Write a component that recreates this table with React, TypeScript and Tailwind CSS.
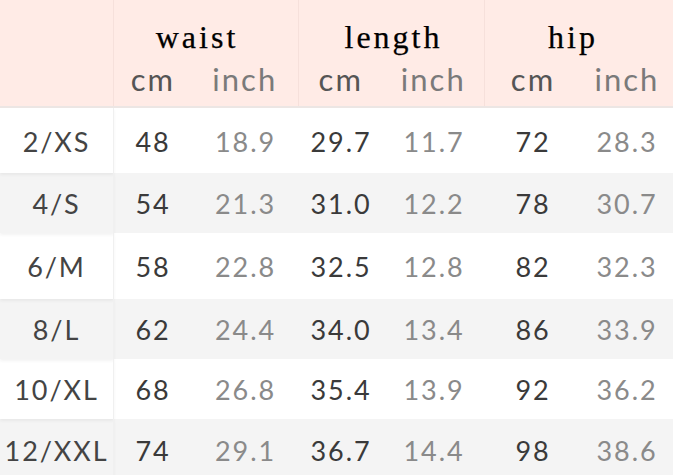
import React from "react";

const groups = [
  { name: "waist", pad: "pr-[18px]" },
  { name: "length", pad: "pl-[4px]" },
  { name: "hip", pad: "pr-[12px]" },
];

const rows = [
  { size: "2/XS", v: ["48", "18.9", "29.7", "11.7", "72", "28.3"], bg: "bg-white", h: "h-[65px]" },
  { size: "4/S", v: ["54", "21.3", "31.0", "12.2", "78", "30.7"], bg: "bg-[#f4f4f4]", h: "h-[60px]" },
  { size: "6/M", v: ["58", "22.8", "32.5", "12.8", "82", "32.3"], bg: "bg-white", h: "h-[66px]" },
  { size: "8/L", v: ["62", "24.4", "34.0", "13.4", "86", "33.9"], bg: "bg-[#f4f4f4]", h: "h-[60px]" },
  { size: "10/XL", v: ["68", "26.8", "35.4", "13.9", "92", "36.2"], bg: "bg-white", h: "h-[60px]" },
  { size: "12/XXL", v: ["74", "29.1", "36.7", "14.4", "98", "38.6"], bg: "bg-[#f4f4f4]", h: "h-[62px]" },
];

// widths of the six value columns (cm / inch per group)
const colW = ["w-[78px]", "w-[107px]", "w-[84px]", "w-[102px]", "w-[96px]", "flex-1"];
const groupW = ["w-[185px]", "w-[186px]", "flex-1"];

export default function App() {
  return (
    <div className="w-[673px] h-[475px] overflow-hidden bg-white font-['Lato',sans-serif]">
      {/* header */}
      <div className="flex h-[108px] bg-[#ffebe6] border-b-2 border-[#ece6e4]">
        <div className="w-[114px] border-r border-[#f6e0db]" />
        {groups.map((g, gi) => (
          <div key={g.name} className={`${groupW[gi]} flex flex-col border-r border-[#f6e0db] last:border-r-0`}>
            <div
              className={`${g.pad} pt-[21px] text-center font-['Liberation_Serif',serif] text-[32px] leading-none tracking-[3px] text-black [-webkit-text-stroke:0.25px_black]`}
            >
              {g.name}
            </div>
            <div className="mt-[11px] flex text-[31px] leading-none tracking-[2px]">
              <div className={`${colW[gi * 2]} text-center text-[#555]`}>cm</div>
              <div className={`${colW[gi * 2 + 1]} text-center text-[#7a7a7a]`}>inch</div>
            </div>
          </div>
        ))}
      </div>

      {/* body */}
      {rows.map((r) => (
        <div key={r.size} className={`flex ${r.h} ${r.bg} pt-[3px] text-[27px] tracking-[0.07em]`}>
          <div className="w-[114px] -mt-[3px] pt-[3px] flex items-center justify-center border-r border-[#f0f0f0] text-[#444] shadow-[0_2px_3px_rgba(0,0,0,0.05)]">
            {r.size}
          </div>
          {r.v.map((val, i) => (
            <div
              key={i}
              className={`${colW[i]} flex items-center justify-center ${i % 2 === 0 ? "text-[#3a3a3a]" : "text-[#8a8a8a]"}`}
            >
              {val}
            </div>
          ))}
        </div>
      ))}
    </div>
  );
}
